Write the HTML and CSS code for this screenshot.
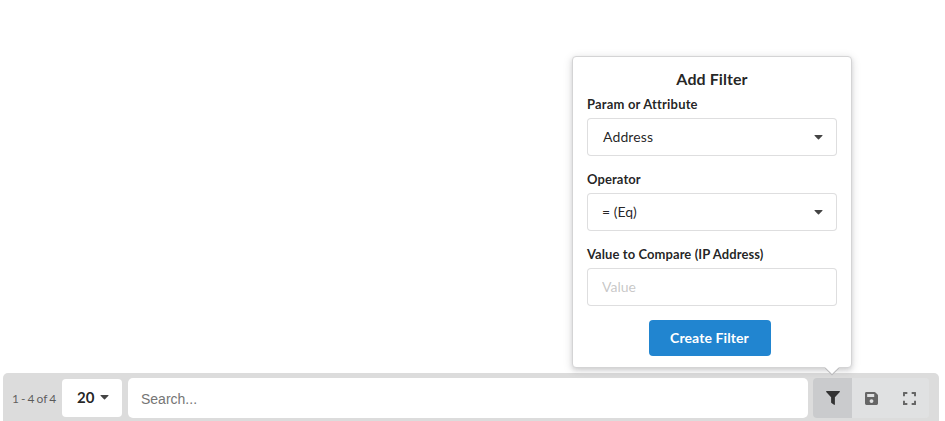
FILE: index.html
```
<!DOCTYPE html>
<html lang="en">
<head>
<meta charset="utf-8">
<title>Add Filter</title>
<link rel="stylesheet" href="styles.css">
</head>
<body>
<main class="page">
  <form class="popup">
    <h2 class="title">Add Filter</h2>
    <div class="field">
      <label class="label param-label">Param or Attribute</label>
      <div class="control select param"><span>Address</span><svg class="caret" viewBox="0 0 9 5"><path d="M.9 0h7.2q.8 0 .3.7L5 4.3q-.5.5-1 0L.6.7Q.1 0 .9 0z"/></svg></div>
    </div>
    <div class="field">
      <label class="label">Operator</label>
      <div class="control select"><span>= (Eq)</span><svg class="caret" viewBox="0 0 9 5"><path d="M.9 0h7.2q.8 0 .3.7L5 4.3q-.5.5-1 0L.6.7Q.1 0 .9 0z"/></svg></div>
    </div>
    <div class="field">
      <label class="label" for="value">Value to Compare (IP Address)</label>
      <input class="control value" id="value" type="text" placeholder="Value">
    </div>
    <button class="create" type="button">Create Filter</button>
  </form>
  <div class="toolbar">
    <span class="count">1 - 4 of 4</span>
    <div class="page-size"><span>20</span><svg class="caret" viewBox="0 0 9 5"><path d="M.9 0h7.2q.8 0 .3.7L5 4.3q-.5.5-1 0L.6.7Q.1 0 .9 0z"/></svg></div>
    <input class="search" type="text" placeholder="Search...">
    <div class="actions">
      <button class="action active" type="button"><svg width="14" height="14" viewBox="0 0 14 14"><path d="M.7 0h12.6q1 .3.5 1.100L8.900 6.300v7.100q-.2.700-.9.400L5.500 12q-.4-.3-.4-.8V6.300L.2 1.100Q-.2.200.7 0z"/></svg></button>
      <button class="action" type="button"><svg width="13" height="13" viewBox="0 0 12 12"><path fill-rule="evenodd" d="M1.300 0h7.500q.5 0 .9.400l1.900 1.900q.4.400.4.900v7.500q0 1.300-1.300 1.300H1.300Q0 12 0 10.700V1.300Q0 0 1.300 0zM2 1.800v2.700h6.500V1.800zM6 6.600a1.800 1.800 0 1 0 0 3.600a1.800 1.800 0 1 0 0-3.600z"/></svg></button>
      <button class="action" type="button"><svg width="13" height="13" viewBox="0 0 12 12"><path d="M0 4V.5Q0 0 .5 0H4v1.800H1.800V4zM8 0h3.500q.5 0 .5.500V4h-1.800V1.800H8zM0 8h1.800v2.200H4V12H.5q-.5 0-.5-.5zM10.200 8H12v3.500q0 .5-.5.500H8v-1.800h2.200z"/></svg></button>
    </div>
  </div>
</main>
</body>
</html>
```
FILE: styles.css
```
* { box-sizing: border-box; }
body {
  margin: 0;
  background: #fff;
  color: rgba(0, 0, 0, .87);
  font: 14px/18px Lato, sans-serif;
}
input, button { font-family: Lato, sans-serif; margin: 0; }
.page {
  position: relative;
  height: 421px;
  overflow: hidden;
  padding: 373px 6px 0 3px;
}
.popup {
  position: absolute;
  z-index: 1;
  right: 93px;
  bottom: 53px;
  width: 280px;
  height: 312px;
  padding: 14px;
  border: 1px solid #d4d4d5;
  border-radius: 4px;
  background: #fff;
  box-shadow: 0 2px 4px rgba(34, 36, 38, .12), 0 2px 10px rgba(34, 36, 38, .15);
}
.popup::before {
  content: "";
  position: absolute;
  right: 14px;
  bottom: -5px;
  width: 10px;
  height: 10px;
  transform: rotate(45deg);
  background: #fff;
  box-shadow: 1px 1px 0 #bababc;
}
.title {
  margin: -1px 0 7px;
  font-size: 16px;
  line-height: 18px;
  font-weight: 700;
  letter-spacing: .08px;
  text-align: center;
}
.field { margin-bottom: 14px; }
.label {
  display: block;
  margin-bottom: 4px;
  font-size: 13px;
  line-height: 19px;
  font-weight: 700;
  letter-spacing: .08px;
}
.param-label { letter-spacing: .18px; }
.control {
  display: block;
  width: 250px;
  height: 38px;
  padding: 0 13px 0 14px;
  border: 1px solid rgba(34, 36, 38, .15);
  border-radius: 4px;
  background: #fff;
  font-size: 14px;
}
.select {
  display: flex;
  align-items: center;
  justify-content: space-between;
}
.param { padding-left: 15px; letter-spacing: .12px; }
.value { padding-bottom: 2px; }
.control::placeholder { color: rgba(191, 191, 191, .87); }
.caret { width: 9px; height: 5px; fill: #444; }
.create {
  display: block;
  width: 122px;
  height: 36px;
  margin: 0 0 0 62px;
  padding: 0 1px 2px 0;
  border: 0;
  border-radius: 4px;
  background: #2185d0;
  color: #fff;
  font-size: 14px;
  font-weight: 700;
  letter-spacing: .1px;
}
.toolbar {
  display: flex;
  height: 60px;
  padding: 5px 10px 0 9px;
  border-radius: 5px;
  background: #dcdcdc;
}
.count {
  width: 50px;
  padding-top: 12px;
  color: rgba(0, 0, 0, .6);
  font-size: 12px;
  word-spacing: -1px;
  white-space: nowrap;
}
.page-size {
  display: flex;
  align-items: center;
  justify-content: space-between;
  width: 60px;
  height: 38px;
  margin: 1px 6px 0 0;
  padding: 0 13px 2px 15px;
  border-radius: 4px;
  background: #fff;
  font-size: 15px;
  font-weight: 700;
}
.search {
  width: 680px;
  height: 40px;
  margin-right: 5px;
  padding: 2px 13px 0;
  border: 0;
  border-radius: 5px;
  background: #fff;
  font: 14px "Liberation Sans", sans-serif;
}
.search::placeholder { color: #757575; }
.actions {
  display: flex;
  width: 116px;
  height: 40px;
  border-radius: 4px;
  overflow: hidden;
  background: #e0e1e2;
}
.action {
  display: flex;
  flex: 1;
  align-items: center;
  justify-content: center;
  padding: 0;
  border: 0;
  background: #e0e1e2;
}
.action svg { fill: #666; }
.active { background: #cacbcd; padding-left: 1px; }
.active svg { fill: #333; }
```
